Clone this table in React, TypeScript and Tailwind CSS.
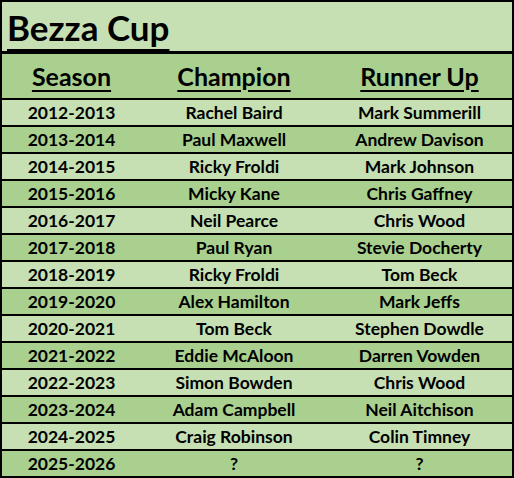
import React from "react";

type Row = {
  season: string;
  champion: string;
  runnerUp: string;
};

const rows: Row[] = [
  { season: "2012-2013", champion: "Rachel Baird", runnerUp: "Mark Summerill" },
  { season: "2013-2014", champion: "Paul Maxwell", runnerUp: "Andrew Davison" },
  { season: "2014-2015", champion: "Ricky Froldi", runnerUp: "Mark Johnson" },
  { season: "2015-2016", champion: "Micky Kane", runnerUp: "Chris Gaffney" },
  { season: "2016-2017", champion: "Neil Pearce", runnerUp: "Chris Wood" },
  { season: "2017-2018", champion: "Paul Ryan", runnerUp: "Stevie Docherty" },
  { season: "2018-2019", champion: "Ricky Froldi", runnerUp: "Tom Beck" },
  { season: "2019-2020", champion: "Alex Hamilton", runnerUp: "Mark Jeffs" },
  { season: "2020-2021", champion: "Tom Beck", runnerUp: "Stephen Dowdle" },
  { season: "2021-2022", champion: "Eddie McAloon", runnerUp: "Darren Vowden" },
  { season: "2022-2023", champion: "Simon Bowden", runnerUp: "Chris Wood" },
  { season: "2023-2024", champion: "Adam Campbell", runnerUp: "Neil Aitchison" },
  { season: "2024-2025", champion: "Craig Robinson", runnerUp: "Colin Timney" },
  { season: "2025-2026", champion: "?", runnerUp: "?" },
];

const App = () => {
  return (
    <div className="w-[514px] h-[478px] bg-white font-['Lato',sans-serif] text-black">
      <div className="h-full border-2 border-black flex flex-col">
        <div className="h-[51px] bg-[#c6e0b4] border-b-[3px] border-black box-content pl-[5px] pt-[3px]">
          <h1 className="text-[35px] font-bold leading-[44px] underline decoration-[3px] underline-offset-[8px]">
            Bezza Cup
          </h1>
        </div>
        <div className="h-[42px] bg-[#a9d08e] border-b-2 border-black box-content grid grid-cols-[139px_186px_1fr] items-start pt-[7px] text-[25px] font-bold leading-[30px]">
          <div className="text-center">
            <span className="underline decoration-2 underline-offset-[4px]">Season</span>
          </div>
          <div className="text-center">
            <span className="underline decoration-2 underline-offset-[4px]">Champion</span>
          </div>
          <div className="text-center">
            <span className="underline decoration-2 underline-offset-[4px]">Runner Up</span>
          </div>
        </div>
        {rows.map((row, idx) => (
          <div
            key={idx}
            className={`${idx % 2 === 0 ? "bg-[#c6e0b4]" : "bg-[#a9d08e]"} ${
              idx < rows.length - 1 ? "border-b-2 border-black" : ""
            } h-[25px] box-content grid grid-cols-[139px_186px_1fr] items-start pt-[1px] text-[17.5px] font-bold leading-[24px]`}
          >
            <div className="text-center">{row.season}</div>
            <div className="text-center">{row.champion}</div>
            <div className="text-center">{row.runnerUp}</div>
          </div>
        ))}
      </div>
    </div>
  );
};

export default App;
